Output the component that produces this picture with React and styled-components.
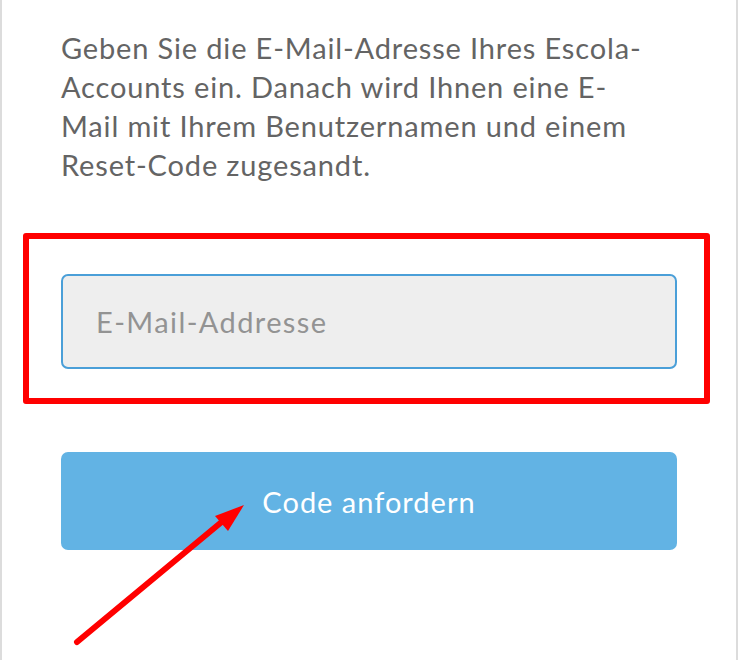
import styled, { createGlobalStyle } from "styled-components";

const GlobalStyle = createGlobalStyle`
  html, body {
    margin: 0;
    padding: 0;
    background: #fff;
  }
  body {
    font-family: "Lato", "Open Sans", sans-serif;
  }
`;

const Page = styled.div`
  position: relative;
  box-sizing: border-box;
  width: 738px;
  height: 660px;
  overflow: hidden;
  border-left: 2px solid #dcdcdc;
  border-right: 2px solid #dcdcdc;
  padding: 28px 59px 0 59px;
`;

const Intro = styled.p`
  margin: 0;
  width: 600px;
  font-size: 29px;
  letter-spacing: 0.85px;
  line-height: 39px;
  color: #646464;
`;

const Highlight = styled.div`
  box-sizing: border-box;
  margin: 49px 0 0 -38px;
  width: 687px;
  height: 171px;
  border: 6px solid #ff0000;
  border-radius: 3px;
  padding: 35px 0 0 32px;
`;

const EmailInput = styled.input`
  box-sizing: border-box;
  display: block;
  width: 616px;
  height: 95px;
  padding: 0 0 0 33px;
  border: 2px solid #4a9fd8;
  border-radius: 7px;
  background: #eeeeee;
  font-family: "Lato", "Open Sans", sans-serif;
  font-size: 29px;
  letter-spacing: 1.4px;
  color: #555;
  outline: none;
  &::placeholder {
    color: #939393;
  }
`;

const SubmitButton = styled.button`
  display: flex;
  align-items: center;
  justify-content: center;
  box-sizing: border-box;
  width: 616px;
  height: 98px;
  margin-top: 48px;
  border: none;
  border-radius: 7px;
  background: #62b3e4;
  color: #ffffff;
  font-family: "Lato", "Open Sans", sans-serif;
  font-size: 29px;
  letter-spacing: 1px;
  cursor: pointer;
`;

const Arrow = styled.svg`
  position: absolute;
  left: 0;
  top: 0;
  pointer-events: none;
`;

export default function App() {
  return (
    <>
      <GlobalStyle />
      <Page>
        <Intro>
          Geben Sie die E-Mail-Adresse Ihres Escola-Accounts ein. Danach wird
          Ihnen eine E-Mail mit Ihrem Benutzernamen und einem Reset-Code
          zugesandt.
        </Intro>
        <Highlight>
          <EmailInput type="email" placeholder="E-Mail-Addresse" />
        </Highlight>
        <SubmitButton type="button">Code anfordern</SubmitButton>
        <Arrow width="738" height="660" viewBox="0 0 738 660">
          <line
            x1="75"
            y1="642"
            x2="222"
            y2="520"
            stroke="#ff0000"
            strokeWidth="6"
            strokeLinecap="round"
          />
          <polygon points="242,505 213,516 226,531" fill="#ff0000" />
        </Arrow>
      </Page>
    </>
  );
}
